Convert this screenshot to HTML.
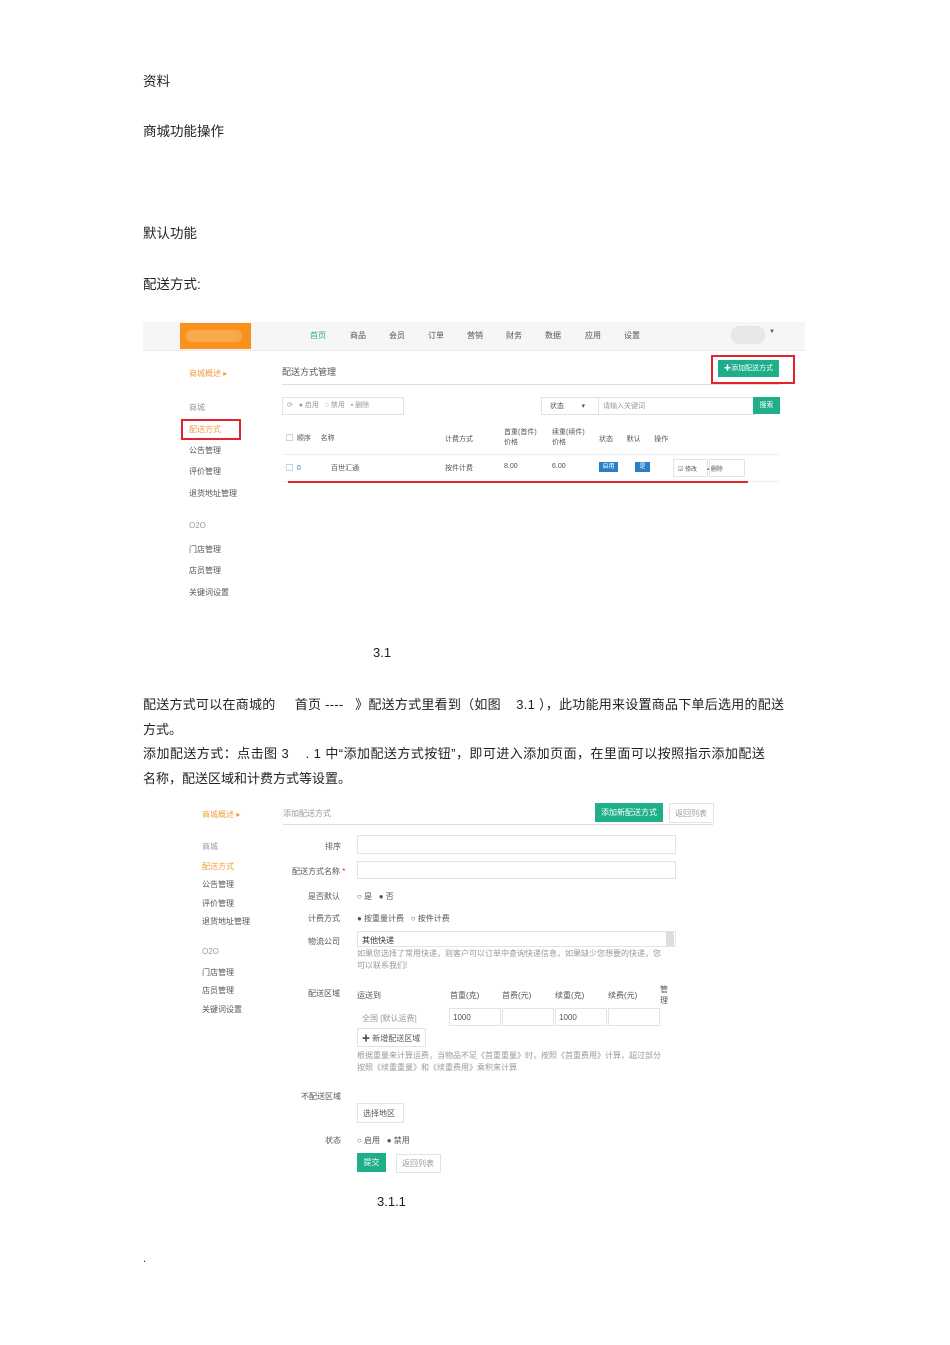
<!DOCTYPE html>
<html><head><meta charset="utf-8"><style>
body{margin:0;width:950px;height:1345px;background:#fff;position:relative;font-family:"Liberation Sans","Noto Sans CJK SC",sans-serif;color:#222;overflow:hidden}
.a{position:absolute;white-space:nowrap}
.t{font-size:13.5px}
.s{font-size:8px;color:#555}
.g{color:#999}
.o{color:#f39c3c}
.btn{position:absolute;background:#1fae8a;color:#fff;font-size:8px;text-align:center}
.box{position:absolute;border:1px solid #e3e3e3;background:#fff}
.red{position:absolute;border:2px solid #e0262b}
</style></head><body>
<div class="a t" style="left:143px;top:70px">资料</div>
<div class="a t" style="left:143px;top:120px">商城功能操作</div>
<div class="a t" style="left:143px;top:222px">默认功能</div>
<div class="a t" style="left:143px;top:273px">配送方式:</div>

<!-- image 1 -->
<div class="a" style="left:143px;top:322px;width:662px;height:28px;background:#f6f6f6;border-bottom:1px solid #eaeaea"></div>
<div class="a" style="left:180px;top:323px;width:71px;height:26px;background:#f7921e"></div>
<div class="a" style="left:186px;top:330px;width:56px;height:12px;background:#f9a84a;border-radius:6px"></div>
<div class="a s" style="left:310px;top:330px;color:#1fae8a">首页</div>
<div class="a s" style="left:350px;top:330px">商品</div>
<div class="a s" style="left:389px;top:330px">会员</div>
<div class="a s" style="left:428px;top:330px">订单</div>
<div class="a s" style="left:467px;top:330px">营销</div>
<div class="a s" style="left:506px;top:330px">财务</div>
<div class="a s" style="left:545px;top:330px">数据</div>
<div class="a s" style="left:585px;top:330px">应用</div>
<div class="a s" style="left:624px;top:330px">设置</div>
<div class="a" style="left:731px;top:326px;width:34px;height:18px;background:#e8e8e8;border-radius:8px"></div>
<div class="a s" style="left:769px;top:329px;font-size:6px">▼</div>

<div class="a s o" style="left:189px;top:368px">商城概述 ▸</div>
<div class="a s g" style="left:189px;top:402px">商城</div>
<div class="a s o" style="left:189px;top:424px">配送方式</div>
<div class="red" style="left:181px;top:419px;width:56px;height:17px"></div>
<div class="a s" style="left:189px;top:445px">公告管理</div>
<div class="a s" style="left:189px;top:466px">评价管理</div>
<div class="a s" style="left:189px;top:488px">退货地址管理</div>
<div class="a s g" style="left:189px;top:521px">O2O</div>
<div class="a s" style="left:189px;top:544px">门店管理</div>
<div class="a s" style="left:189px;top:565px">店员管理</div>
<div class="a s" style="left:189px;top:587px">关键词设置</div>

<div class="a s" style="left:282px;top:365px;font-size:9px">配送方式管理</div>
<div class="a" style="left:282px;top:384px;width:498px;height:1px;background:#ddd"></div>
<div class="btn" style="left:718px;top:360px;width:61px;height:17px;line-height:17px;font-size:7px">✚添加配送方式</div>
<div class="red" style="left:711px;top:355px;width:80px;height:25px"></div>

<div class="box" style="left:282px;top:397px;width:120px;height:16px"></div>
<div class="a s g" style="left:287px;top:400px;font-size:7px">⟳ &nbsp; ● 启用 &nbsp; ○ 禁用 &nbsp; ▪ 删除</div>
<div class="box" style="left:541px;top:397px;width:56px;height:16px"></div>
<div class="a s" style="left:550px;top:401px;font-size:7px">状态 &nbsp; &nbsp; &nbsp; &nbsp; ▾</div>
<div class="box" style="left:598px;top:397px;width:155px;height:16px"></div>
<div class="a s g" style="left:603px;top:401px;font-size:7px">请输入关键词</div>
<div class="btn" style="left:753px;top:397px;width:27px;height:17px;line-height:17px;font-size:7px">搜索</div>

<div class="a s" style="left:286px;top:433px;font-size:7px">▢ &nbsp;顺序 &nbsp; &nbsp; 名称</div>
<div class="a s" style="left:445px;top:434px;font-size:7px">计费方式</div>
<div class="a s" style="left:504px;top:428px;font-size:7px;line-height:10px">首重(首件)<br>价格</div>
<div class="a s" style="left:552px;top:428px;font-size:7px;line-height:10px">续重(续件)<br>价格</div>
<div class="a s" style="left:599px;top:434px;font-size:7px">状态 &nbsp; &nbsp; &nbsp; 默认 &nbsp; &nbsp; &nbsp; 操作</div>
<div class="a" style="left:282px;top:454px;width:498px;height:1px;background:#eee"></div>
<div class="a s" style="left:286px;top:463px;font-size:7px">▢ &nbsp;<span style="color:#37c">0</span></div>
<div class="a s" style="left:331px;top:463px;font-size:7px">百世汇通</div>
<div class="a s" style="left:445px;top:463px;font-size:7px">按件计费</div>
<div class="a s" style="left:504px;top:463px;font-size:7px">8.00</div>
<div class="a s" style="left:552px;top:463px;font-size:7px">6.00</div>
<div class="a" style="left:599px;top:462px;width:19px;height:10px;background:#2a7fc9;color:#fff;font-size:6px;text-align:center;line-height:10px">启用</div>
<div class="a" style="left:635px;top:462px;width:15px;height:10px;background:#2a7fc9;color:#fff;font-size:6px;text-align:center;line-height:10px">是</div>
<div class="box" style="left:673px;top:459px;width:33px;height:16px"></div>
<div class="box" style="left:709px;top:459px;width:34px;height:16px"></div>
<div class="a s" style="left:678px;top:464px;font-size:6px">☑ 修改 &nbsp; &nbsp; &nbsp;▪ 删除</div>
<div class="a" style="left:282px;top:481px;width:498px;height:1px;background:#eee"></div>
<div class="a" style="left:288px;top:481px;width:460px;height:2px;background:#e0262b"></div>

<div class="a" style="left:373px;top:645px;font-size:13px">3.1</div>

<div class="a t" style="left:143px;top:694px;font-size:13px;letter-spacing:0.25px">配送方式可以在商城的 &nbsp; &nbsp; 首页 ---- &nbsp; 》配送方式里看到（如图 &nbsp; &nbsp;3.1 ），此功能用来设置商品下单后选用的配送</div>
<div class="a t" style="left:143px;top:719px;font-size:13px">方式。</div>
<div class="a t" style="left:143px;top:743px;font-size:13px;letter-spacing:0.45px">添加配送方式：点击图 3 &nbsp; &nbsp;. 1 中“添加配送方式按钮”，即可进入添加页面，在里面可以按照指示添加配送</div>
<div class="a t" style="left:143px;top:768px;font-size:13px">名称，配送区域和计费方式等设置。</div>

<!-- image 2 -->
<div class="a s o" style="left:202px;top:809px">商城概述 ▸</div>
<div class="a s g" style="left:202px;top:841px">商城</div>
<div class="a s o" style="left:202px;top:861px">配送方式</div>
<div class="a s" style="left:202px;top:879px">公告管理</div>
<div class="a s" style="left:202px;top:898px">评价管理</div>
<div class="a s" style="left:202px;top:916px">退货地址管理</div>
<div class="a s g" style="left:202px;top:947px">O2O</div>
<div class="a s" style="left:202px;top:967px">门店管理</div>
<div class="a s" style="left:202px;top:985px">店员管理</div>
<div class="a s" style="left:202px;top:1004px">关键词设置</div>

<div class="a s g" style="left:283px;top:808px">添加配送方式</div>
<div class="a" style="left:283px;top:824px;width:430px;height:1px;background:#ddd"></div>
<div class="btn" style="left:595px;top:803px;width:68px;height:19px;line-height:19px">添加新配送方式</div>
<div class="box" style="left:669px;top:803px;width:43px;height:18px"></div>
<div class="a s g" style="left:675px;top:808px">返回列表</div>

<div class="a s" style="left:325px;top:841px">排序</div>
<div class="box" style="left:357px;top:835px;width:317px;height:17px"></div>
<div class="a s" style="left:292px;top:866px">配送方式名称 <span style="color:#e0262b">*</span></div>
<div class="box" style="left:357px;top:861px;width:317px;height:16px"></div>
<div class="a s" style="left:308px;top:891px">是否默认</div>
<div class="a s" style="left:357px;top:891px">○ 是 &nbsp; ● 否</div>
<div class="a s" style="left:308px;top:913px">计费方式</div>
<div class="a s" style="left:357px;top:913px">● 按重量计费 &nbsp; ○ 按件计费</div>
<div class="a s" style="left:308px;top:936px">物流公司</div>
<div class="box" style="left:357px;top:931px;width:317px;height:14px"></div>
<div class="a s" style="left:362px;top:935px;color:#333">其他快递</div>
<div class="a" style="left:666px;top:932px;width:8px;height:14px;background:#ddd"></div>
<div class="a s g" style="left:357px;top:948px;line-height:12px">如果您选择了常用快递，则客户可以订单中查询快递信息，如果缺少您想要的快递，您<br>可以联系我们!</div>
<div class="a s" style="left:308px;top:988px">配送区域</div>
<div class="a s" style="left:357px;top:990px">运送到</div>
<div class="a s" style="left:450px;top:990px">首重(克)</div>
<div class="a s" style="left:502px;top:990px">首费(元)</div>
<div class="a s" style="left:555px;top:990px">续重(克)</div>
<div class="a s" style="left:608px;top:990px">续费(元)</div>
<div class="a s" style="left:660px;top:984px;line-height:11px">管<br>理</div>
<div class="a s g" style="left:362px;top:1013px">全国 [默认运费]</div>
<div class="box" style="left:449px;top:1008px;width:50px;height:16px"></div>
<div class="box" style="left:502px;top:1008px;width:50px;height:16px"></div>
<div class="box" style="left:555px;top:1008px;width:50px;height:16px"></div>
<div class="box" style="left:608px;top:1008px;width:50px;height:16px"></div>
<div class="a s" style="left:453px;top:1013px">1000</div>
<div class="a s" style="left:559px;top:1013px">1000</div>
<div class="box" style="left:357px;top:1028px;width:67px;height:17px"></div>
<div class="a s" style="left:362px;top:1033px">✚ 新增配送区域</div>
<div class="a s g" style="left:357px;top:1050px;line-height:12px">根据重量来计算运费，当物品不足《首重重量》时，按照《首重费用》计算，超过部分<br>按照《续重重量》和《续重费用》乘积来计算</div>
<div class="a s" style="left:301px;top:1091px">不配送区域</div>
<div class="box" style="left:357px;top:1103px;width:45px;height:18px"></div>
<div class="a s" style="left:363px;top:1108px">选择地区</div>
<div class="a s" style="left:325px;top:1135px">状态</div>
<div class="a s" style="left:357px;top:1135px">○ 启用 &nbsp; ● 禁用</div>
<div class="btn" style="left:357px;top:1153px;width:29px;height:19px;line-height:19px">提交</div>
<div class="box" style="left:396px;top:1154px;width:43px;height:17px"></div>
<div class="a s g" style="left:402px;top:1158px">返回列表</div>

<div class="a" style="left:377px;top:1194px;font-size:13px">3.1.1</div>
<div class="a" style="left:143px;top:1253px;font-size:11px">.</div>
</body></html>
